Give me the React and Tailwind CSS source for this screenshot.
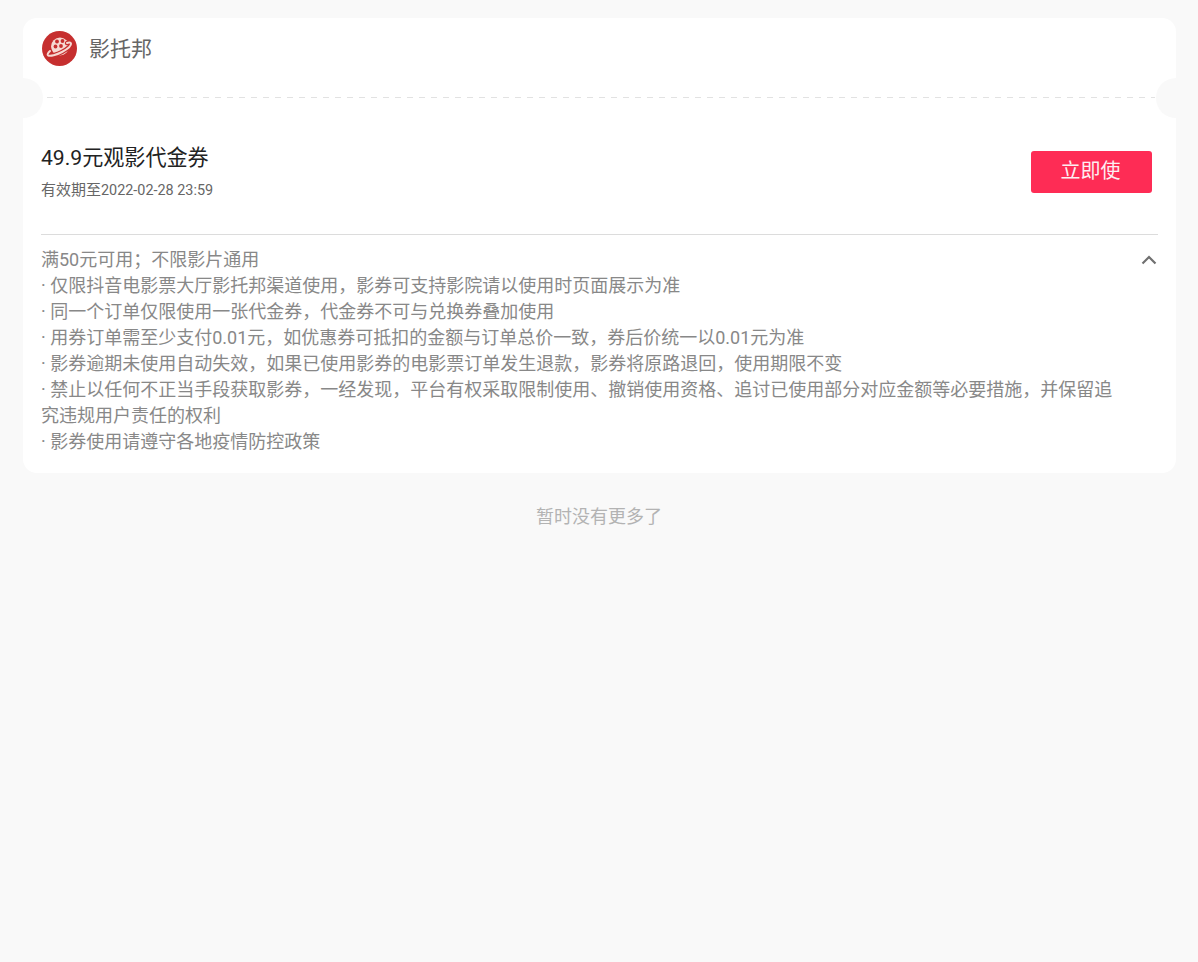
import React from 'react';

const rules = [
  '· 仅限抖音电影票大厅影托邦渠道使用，影券可支持影院请以使用时页面展示为准',
  '· 同一个订单仅限使用一张代金券，代金券不可与兑换券叠加使用',
  '· 用券订单需至少支付0.01元，如优惠券可抵扣的金额与订单总价一致，券后价统一以0.01元为准',
  '· 影券逾期未使用自动失效，如果已使用影券的电影票订单发生退款，影券将原路退回，使用期限不变',
  '· 禁止以任何不正当手段获取影券，一经发现，平台有权采取限制使用、撤销使用资格、追讨已使用部分对应金额等必要措施，并保留追究违规用户责任的权利',
  '· 影券使用请遵守各地疫情防控政策',
];

const Logo = () => (
  <svg width="35" height="35" viewBox="0 0 35 35" className="shrink-0">
    <circle cx="17.5" cy="17.5" r="17.5" fill="#c62f2f" />
    <circle cx="18" cy="15.5" r="9" fill="#f6d9d3" />
    <circle cx="15" cy="10.5" r="1.9" fill="#c62f2f" />
    <circle cx="20.5" cy="10" r="1.9" fill="#c62f2f" />
    <circle cx="13.5" cy="15.5" r="1.9" fill="#c62f2f" />
    <circle cx="19" cy="15" r="1.9" fill="#c62f2f" />
    <path d="M8 20c-2 2-3 3.500-2 4.300 2 1.200 8.500-.3 14-3.300s9.500-6.500 9-8.500c-.3-1-2-1.200-4-.5" fill="none" stroke="#c62f2f" strokeWidth="4.400" strokeLinecap="round" />
    <path d="M8 20c-2 2-3 3.500-2 4.300 2 1.200 8.500-.3 14-3.300s9.500-6.500 9-8.500c-.3-1-2-1.200-4-.5" fill="none" stroke="#f6d9d3" strokeWidth="2" strokeLinecap="round" />
  </svg>
);

export default function App() {
  return (
    <div className="min-h-[962px] bg-[#f9f9f9] pt-[18px] font-['Roboto','Noto_Sans_CJK_SC',sans-serif]">
      {/* Coupon card */}
      <div className="relative mx-[23px] w-[1153px] rounded-[14px] bg-white">
        <div className="flex h-[62px] items-center gap-3 pl-[19px] pb-[1px]">
          <Logo />
          <span className="text-[21px] leading-[30px] text-[#666]">影托邦</span>
        </div>

        {/* Ticket notches and tear line */}
        <div className="relative h-[36px]">
          <div className="absolute -left-[21px] top-[-2px] h-[40px] w-[41px] rounded-full bg-[#f9f9f9]" />
          <div className="absolute -right-[21px] top-[-2px] h-[40px] w-[41px] rounded-full bg-[#f9f9f9]" />
          <div className="absolute left-[24px] right-[21px] top-[17px] h-px bg-[repeating-linear-gradient(to_right,#e2e2e2_0_6px,transparent_6px_12px)]" />
        </div>

        <div className="px-[18px]">
          <div className="flex h-[119px] items-start justify-between border-b border-[#dcdcdc] pr-[6px]">
            <div className="pt-[27px]">
              <div className="text-[21.1px] leading-[30px] text-[#222]">49.9元观影代金券</div>
              <div className="mt-[7px] text-[14.4px] leading-[20px] text-[#666]">
                <span className="text-[15px]">有效期至</span>2022-02-28 23:59
              </div>
            </div>
            <button className="mt-[35px] h-[42px] w-[121px] rounded-[3px] bg-[#fe2c55] pr-[2px] pb-[2px] text-[20px] text-[#fdeef1]">立即使</button>
          </div>

          <div className="relative pt-[12px] pb-[18px] text-[18px] leading-[26px] text-[#888]">
            <div className="w-[1075px]">
              <div>满50元可用；不限影片通用</div>
              {rules.map((rule) => (
                <div key={rule}>{rule}</div>
              ))}
            </div>
            <svg className="absolute right-[1px] top-[19px]" width="16" height="12" viewBox="0 0 16 12" fill="none" stroke="#707070" strokeWidth="2.2">
              <path d="M1.5 9.5L8 3l6.5 6.5" />
            </svg>
          </div>
        </div>
      </div>

      <div className="mt-[31px] text-center text-[18px] leading-[26px] text-[#b3b3b3]">暂时没有更多了</div>
    </div>
  );
}
